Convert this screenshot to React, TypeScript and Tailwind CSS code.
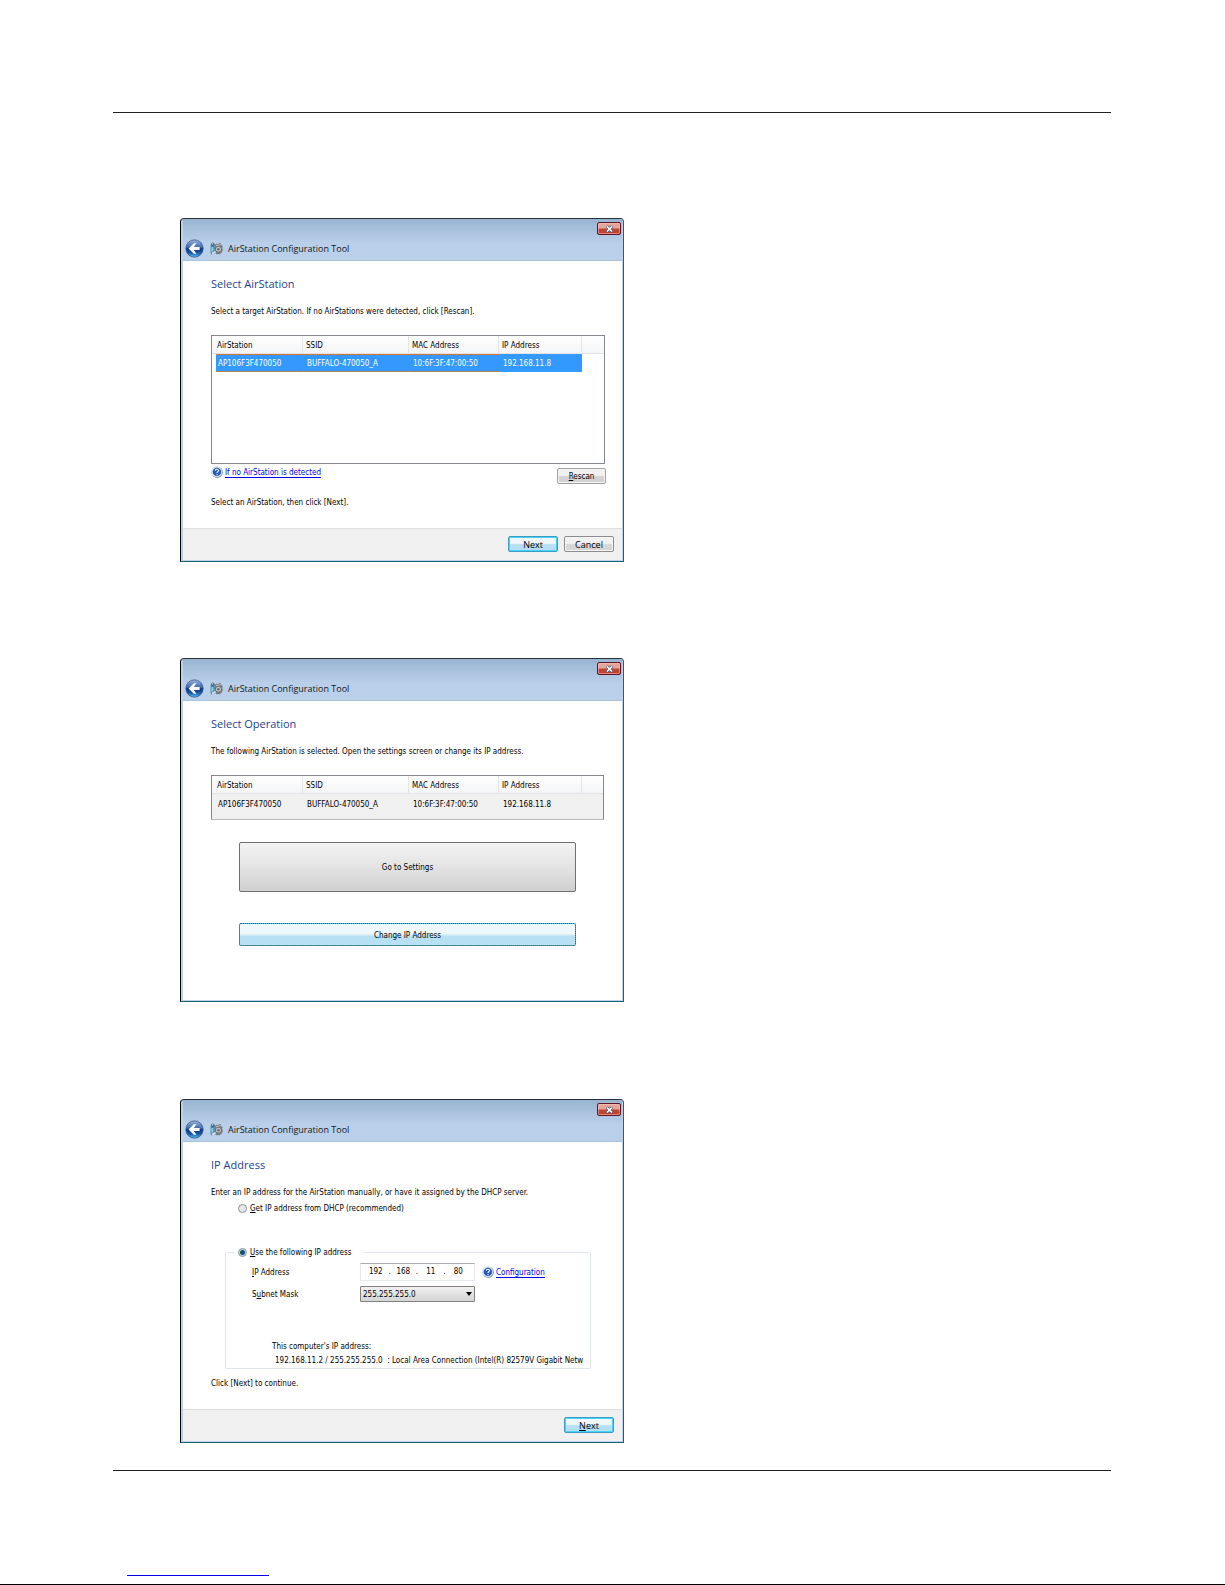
import React, { useState } from 'react';

const BackButton: React.FC = () => (
  <button type="button" aria-label="Back" className="shrink-0">
    <svg width="19" height="19" viewBox="0 0 19 19" className="block">
      <defs>
        <linearGradient id="backFill" x1="0" y1="0" x2="0" y2="1">
          <stop offset="0" stopColor="#9db4dc" />
          <stop offset="0.42" stopColor="#3f6cb6" />
          <stop offset="0.52" stopColor="#0b3484" />
          <stop offset="0.75" stopColor="#1a57a8" />
          <stop offset="1" stopColor="#56c0f4" />
        </linearGradient>
      </defs>
      <circle cx="9.5" cy="9.5" r="9.2" fill="#c9d9ec" />
      <circle cx="9.5" cy="9.5" r="8.7" fill="url(#backFill)" stroke="#3a5888" strokeWidth="0.8" />
      <path d="M3.6 9.5 L8.8 4.2 H11.4 L8.8 7.9 H14.6 V11.1 H8.8 L11.4 14.8 H8.8 Z" fill="#fff" />
    </svg>
  </button>
);

const AppIcon: React.FC = () => (
  <svg width="13" height="13" viewBox="0 0 13 13" className="block shrink-0">
    <path d="M0.6 3.2 L4.8 2.4 V11.8 L1.6 12.4 L0.6 11 Z" fill="#3f86ac" />
    <rect x="1.4" y="5" width="2" height="4.6" fill="#8acbe4" />
    <circle cx="2.8" cy="2.2" r="1.7" fill="#44606e" />
    <circle cx="2.6" cy="1.9" r="0.8" fill="#b4e2f0" />
    <path d="M4.8 2.8 L6.6 1.4 L8 2.2 L9.4 0.8 L11 1.4 L11.2 3 L12.7 4 L12.3 6 L12.9 8 L11.8 10.4 L9.8 12.2 L6.6 12.2 L4.6 10.4 Z" fill="#7b8084" />
    <path d="M6.2 2.6 L8 3.2 L10.2 1.6 L10.6 3.2 L6 4.4 Z" fill="#b9bec2" />
    <ellipse cx="8.4" cy="7.2" rx="3.1" ry="2.9" fill="#c0c4c7" stroke="#53575b" strokeWidth="0.7" />
    <ellipse cx="8.4" cy="7.2" rx="1.4" ry="1.2" fill="#6b7074" />
    <path d="M1.6 10.8 L5.4 9 L5.8 10.4 L2.6 12.4 Z" fill="#dcebf0" />
  </svg>
);

const HelpIcon: React.FC = () => (
  <svg width="12" height="12" viewBox="0 0 12 12" className="block shrink-0">
    <circle cx="6.2" cy="6.2" r="5.7" fill="#8c98ac" />
    <circle cx="5.7" cy="5.7" r="5.4" fill="#dbe4f2" />
    <circle cx="5.9" cy="5.9" r="4.2" fill="#2159c0" />
    <path d="M4.3 4.7 C4.3 2.8 7.6 2.8 7.6 4.6 C7.6 5.8 6 5.8 6 7.1" fill="none" stroke="#fff" strokeWidth="1.1" />
    <circle cx="6" cy="8.6" r="0.7" fill="#fff" />
  </svg>
);

const CloseButton: React.FC = () => (
  <button
    type="button"
    aria-label="Close"
    className="flex h-[13px] w-6 items-center justify-center rounded-[2px] border border-[#5b1a26] bg-linear-to-b from-[#e5a59b] from-45% to-[#c04433] to-55% shadow-[inset_0_0_0_1px_rgba(255,200,190,0.5)]"
  >
    <svg width="9" height="8" viewBox="0 0 9 8" className="block">
      <path d="M1.8 1.2 L7.2 6.8 M7.2 1.2 L1.8 6.8" stroke="#4a4f60" strokeWidth="3" />
      <path d="M2 1.5 L7 6.5 M7 1.5 L2 6.5" stroke="#fff" strokeWidth="1.7" />
    </svg>
  </button>
);

const DialogButton: React.FC<{ primary?: boolean; children: React.ReactNode }> = ({ primary, children }) => (
  <button
    type="button"
    className={
      primary
        ? "h-4 w-[50px] rounded-[2px] border border-[#3c9cc8] bg-linear-to-b from-[#eef7fc] from-45% to-[#b5dff5] to-55% pt-px font-['Open_Sans',sans-serif] text-[9px] leading-3 shadow-[inset_0_0_0_1px_#48d2fa]"
        : "h-4 w-[50px] rounded-[2px] border border-[#8c8c8c] bg-linear-to-b from-[#f1f1f1] from-45% to-[#d6d6d6] to-55% pt-px font-['Open_Sans',sans-serif] text-[9px] leading-3 shadow-[inset_0_0_0_1px_#f6f6f6]"
    }
  >
    {children}
  </button>
);

const HelpLink: React.FC<{ children: React.ReactNode }> = ({ children }) => (
  <a href="#" className="flex items-center gap-[2px] text-[#0000ee]">
    <HelpIcon />
    <span className="border-b border-[#0000ee] pt-[2px] leading-[9px]">{children}</span>
  </a>
);

interface DialogProps {
  heading: string;
  description: string;
  footer?: React.ReactNode;
  children: React.ReactNode;
}

const Dialog: React.FC<DialogProps> = ({ heading, description, footer, children }) => (
  <section className="flex min-h-[344px] w-full max-w-[444px] flex-col overflow-hidden rounded-t-[4px] border border-t-[#2a2f36] border-r-[#1e6478] border-b-[#1e6478] border-l-black bg-[#bcd2ea] pr-px pb-px pl-[2px]">
    <header className="h-[42px] border-b border-[#a9c3de] bg-linear-to-b from-[#98b4d2] to-[#bad0ea] to-60% pt-[3px]">
      <div className="flex justify-end pr-px">
        <CloseButton />
      </div>
      <div className="flex items-center pt-1 pl-[2px]">
        <BackButton />
        <div className="pr-[5px] pl-[6px]">
          <AppIcon />
        </div>
        <span className="font-['Open_Sans',sans-serif] text-[9px] leading-3 text-[#101820]">AirStation Configuration Tool</span>
      </div>
    </header>
    <div className="flex flex-1 flex-col bg-white pt-[15px] pr-4 pl-7">
      <h2 className="font-['Open_Sans',sans-serif] text-[11px] leading-4 text-[#1c3f94]">{heading}</h2>
      <p className="mt-[14px] leading-3">{description}</p>
      {children}
    </div>
    {footer && (
      <footer className="flex h-8 justify-end gap-[6px] border-t border-[#dfdfdf] bg-[#f0f0f0] pt-[7px] pr-2">
        {footer}
      </footer>
    )}
  </section>
);

const columns = ['AirStation', 'SSID', 'MAC Address', 'IP Address'];
const station = ['AP106F3F470050', 'BUFFALO-470050_A', '10:6F:3F:47:00:50', '192.168.11.8'];

const StationTable: React.FC<{ selected?: boolean }> = ({ selected }) => (
  <table className="w-full table-fixed border-separate border-spacing-0 text-left">
    <colgroup>
      <col className="w-[4px]" />
      <col className="w-[87px]" />
      <col className="w-[106px]" />
      <col className="w-[90px]" />
      <col className="w-[83px]" />
      <col />
    </colgroup>
    <thead>
      <tr className="h-[18px] bg-linear-to-b from-white to-[#f3f4f6]">
        <td className="border-b border-[#e2e4e8] p-0"></td>
        {columns.map(name => (
          <th
            key={name}
            scope="col"
            className="border-r border-b border-[#e2e4e8] p-0 pt-[3px] pl-[3px] font-normal whitespace-nowrap first-of-type:pl-px"
          >
            {name}
          </th>
        ))}
        <td className="border-b border-[#e2e4e8] p-0"></td>
      </tr>
    </thead>
    <tbody>
      <tr className="h-[18px]">
        <td className="p-0"></td>
        {station.map(value => (
          <td
            key={value}
            className={
              selected
                ? 'border-t border-b border-dotted border-t-[#d9782a] border-b-[#b98b58] bg-[#3399ff] p-0 pt-px pl-1 whitespace-nowrap text-white nth-2:pl-[2px]'
                : 'p-0 pt-[3px] pl-1 whitespace-nowrap nth-2:pl-[2px]'
            }
          >
            {value}
          </td>
        ))}
        <td className="p-0"></td>
      </tr>
    </tbody>
  </table>
);

const Radio: React.FC<{ id: string; checked: boolean; onChange: () => void }> = ({ id, checked, onChange }) => (
  <input
    id={id}
    type="radio"
    name="ip-mode"
    checked={checked}
    onChange={onChange}
    className="size-[9px] shrink-0 appearance-none rounded-full border border-[#8e8f8f] bg-[#e6e8ea] checked:border-[#8a959c] checked:bg-[radial-gradient(circle,#16506f_0_2px,#b4dcec_3px,#f2f6f8_4px)]"
  />
);

const App: React.FC = () => {
  const [mode, setMode] = useState('manual');
  const [octets, setOctets] = useState(['192', '168', '11', '80']);

  const setOctet = (index: number, value: string) => {
    setOctets(octets.map((octet, i) => (i === index ? value : octet)));
  };

  return (
    <div className="min-h-screen border-b border-black bg-white font-['DejaVu_Sans_Condensed','DejaVu_Sans',sans-serif] text-[8px] leading-3 text-black">
      <div className="pt-28 pr-[114px] pl-[113px]">
        <main className="border-y border-[#231f20] pt-[105px] pb-[27px] pl-[67px]">
          {/* Step 1: choose the access point */}
          <Dialog
            heading="Select AirStation"
            description="Select a target AirStation. If no AirStations were detected, click [Rescan]."
            footer={
              <>
                <DialogButton primary>Next</DialogButton>
                <DialogButton>Cancel</DialogButton>
              </>
            }
          >
            <div className="mt-[17px] mr-px min-h-[129px] border border-[#828790]">
              <StationTable selected />
            </div>
            <div className="flex items-start justify-between pt-[2px]">
              <HelpLink>If no AirStation is detected</HelpLink>
              <div className="pt-[2px]">
                <button
                  type="button"
                  className="h-4 w-[49px] rounded-[2px] border border-[#a0a0a0] bg-linear-to-b from-[#f1f1f1] from-45% to-[#d2d2d2] to-55% pt-px leading-3 shadow-[inset_0_0_0_1px_#f6f6f6]"
                >
                  <span className="underline">R</span>escan
                </button>
              </div>
            </div>
            <p className="mt-[13px]">Select an AirStation, then click [Next].</p>
          </Dialog>

          {/* Step 2: choose the operation */}
          <div className="pt-24">
            <Dialog
              heading="Select Operation"
              description="The following AirStation is selected. Open the settings screen or change its IP address."
            >
              <div className="mt-[17px] mr-[2px] min-h-[45px] border border-[#828790] border-b-[#b8bbc0] bg-[#f0f0f0]">
                <StationTable />
              </div>
              <div className="flex flex-col gap-[31px] pt-[22px] pr-[30px] pl-7">
                <button
                  type="button"
                  className="h-[50px] w-full rounded-[2px] border border-[#707070] bg-linear-to-b from-[#f3f3f3] via-[#e4e4e4] via-48% to-[#d0d0d0] pt-[2px]"
                >
                  Go to Settings
                </button>
                <button
                  type="button"
                  className="h-[23px] w-full rounded-[2px] border border-[#45bfe6] bg-linear-to-b from-[#eef8fd] from-45% to-[#b8e0f5] to-60% pt-[2px] outline-1 -outline-offset-1 outline-dotted outline-[#7a3a28]"
                >
                  Change IP Address
                </button>
              </div>
            </Dialog>
          </div>

          {/* Step 3: enter the address */}
          <div className="pt-[97px]">
            <Dialog
              heading="IP Address"
              description="Enter an IP address for the AirStation manually, or have it assigned by the DHCP server."
              footer={
                <DialogButton primary>
                  <span className="underline">N</span>ext
                </DialogButton>
              }
            >
              <div className="flex items-center gap-[3px] pt-[3px] pl-[27px]">
                <Radio id="mode-dhcp" checked={mode === 'dhcp'} onChange={() => setMode('dhcp')} />
                <label htmlFor="mode-dhcp" className="pt-px">
                  <span className="underline">G</span>et IP address from DHCP (recommended)
                </label>
              </div>
              <fieldset className="mt-[31px] mr-[15px] ml-[14px] min-w-0 rounded-[2px] border border-[#dfe3ea] pb-px">
                <legend className="ml-2 flex items-center gap-[3px] px-1 pr-3">
                  <Radio id="mode-manual" checked={mode === 'manual'} onChange={() => setMode('manual')} />
                  <label htmlFor="mode-manual" className="pt-px">
                    <span className="underline">U</span>se the following IP address
                  </label>
                </legend>
                <div className="flex items-center pt-1 pl-[26px]">
                  <label htmlFor="octet-0" className="w-[108px] pt-[2px]">
                    <span className="underline">I</span>P Address
                  </label>
                  <div className="flex h-[18px] w-[115px] items-center border border-[#e3e9ef] border-t-[#abadb3] pr-1 pl-[3px]">
                    {octets.map((octet, i) => (
                      <React.Fragment key={i}>
                        {i > 0 && <span className="w-1 text-center">.</span>}
                        <input
                          id={`octet-${i}`}
                          aria-label={`Octet ${i + 1}`}
                          value={octet}
                          onChange={e => setOctet(i, e.target.value)}
                          className="h-3 w-6 min-w-0 text-center"
                        />
                      </React.Fragment>
                    ))}
                  </div>
                  <div className="pl-[7px]">
                    <HelpLink>Configuration</HelpLink>
                  </div>
                </div>
                <div className="flex items-center pt-[5px] pl-[26px]">
                  <label htmlFor="subnet" className="w-[108px] pt-[2px]">
                    S<span className="underline">u</span>bnet Mask
                  </label>
                  <div className="relative w-[115px]">
                    <select
                      id="subnet"
                      className="block h-4 w-full appearance-none rounded-[1px] border border-[#808080] bg-linear-to-b from-[#f1f1f1] to-[#d4d4d4] pt-px pl-[2px]"
                    >
                      <option>255.255.255.0</option>
                    </select>
                    <svg width="6" height="4" viewBox="0 0 6 4" className="pointer-events-none absolute top-[6px] right-[3px]">
                      <path d="M0 0 H6 L3 4 Z" fill="#000" />
                    </svg>
                  </div>
                </div>
                <p className="mt-[39px] pl-[46px]">This computer's IP address:</p>
                <p className="mt-[2px] ml-[49px] whitespace-pre">
                  192.168.11.2 / 255.255.255.0  : Local Area Connection (Intel(R) 82579V Gigabit Netw
                </p>
              </fieldset>
              <p className="mt-[9px]">Click [Next] to continue.</p>
            </Dialog>
          </div>
        </main>
        <div className="mt-[104px] ml-[14px] w-[142px] border-b border-[#0000ee]" />
      </div>
    </div>
  );
};

export default App;
